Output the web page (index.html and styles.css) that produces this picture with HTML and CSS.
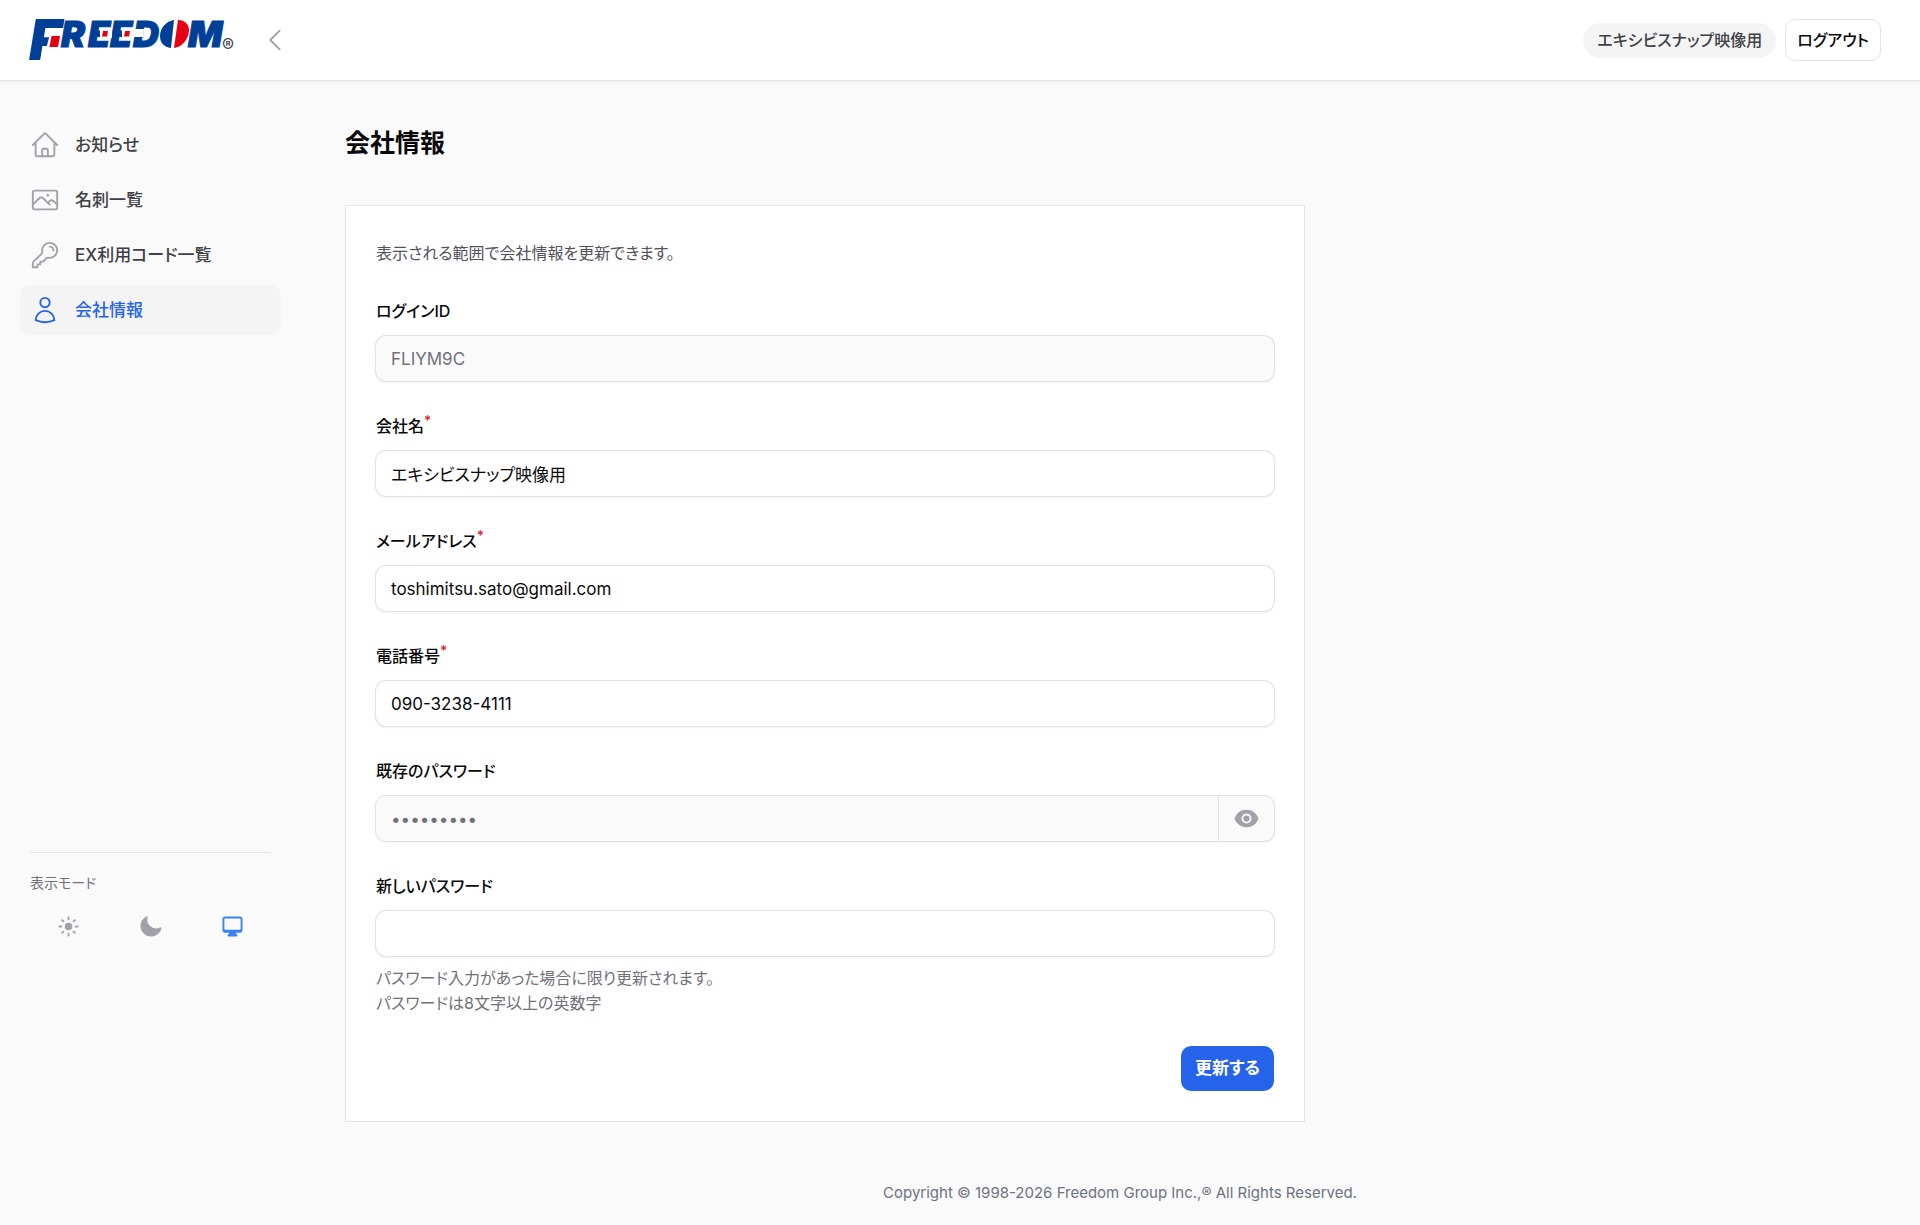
FILE: index.html
```html
<!DOCTYPE html>
<html lang="ja">
<head>
<meta charset="utf-8">
<meta name="viewport" content="width=device-width, initial-scale=1">
<title>会社情報</title>
<link rel="stylesheet" href="styles.css">
</head>
<body>
<header class="topbar">
  <a class="brand" href="#" aria-label="FREEDOM">
    <svg class="logo" width="206" height="42" viewBox="0 0 206 42" aria-hidden="true">
      <text class="logo-initial" x="-1" y="41">F</text>
      <path class="logo-gap" d="M20 15H34V30H16Z"/>
      <path class="logo-red" d="M21.500 17H30L28 28H19.500Z"/>
      <text class="logo-letters" x="31 58 80 103 158" y="28">REEDM</text>
      <path class="logo-gap" d="M70 10H82V19H70ZM92 10H104V19H92ZM101 10H114L113 18H101Z"/>
      <path class="logo-red" d="M73 12H78L77 17.500H72ZM95 12H100L99 17.500H94Z"/>
      <path class="logo-blue" d="M144 1C136 2 130 9 130 17C130 24 134 28 141 29Z"/>
      <path class="logo-red" d="M148 1C155 1 159 5 159 12C158 21 152 28 144 29Z"/>
      <text class="logo-mark" x="192" y="33">®</text>
    </svg>
  </a>
  <button class="collapse" type="button" aria-label="メニューを閉じる">
    <svg class="icon-outline" viewBox="0 0 24 24"><path d="M15.75 19.5 8.25 12l7.5-7.5"/></svg>
  </button>
  <div class="account">
    <span class="badge">エキシビスナップ映像用</span>
    <button class="logout" type="button">ログアウト</button>
  </div>
</header>
<div class="layout">
  <aside class="sidebar">
    <nav class="nav">
      <a class="nav-item" href="#">
        <svg class="icon-outline" viewBox="0 0 24 24"><path d="m2.25 12 8.954-8.955c.44-.439 1.152-.439 1.591 0L21.75 12M4.5 9.75v10.125c0 .621.504 1.125 1.125 1.125H9.75v-4.875c0-.621.504-1.125 1.125-1.125h2.25c.621 0 1.125.504 1.125 1.125V21h4.125c.621 0 1.125-.504 1.125-1.125V9.75M8.25 21h8.25"/></svg>
        お知らせ
      </a>
      <a class="nav-item" href="#">
        <svg class="icon-outline" viewBox="0 0 24 24"><path d="m2.25 15.75 5.159-5.159a2.25 2.25 0 0 1 3.182 0l5.159 5.159m-1.5-1.5 1.409-1.409a2.25 2.25 0 0 1 3.182 0l2.909 2.909m-18 3.75h16.5a1.5 1.5 0 0 0 1.5-1.5V6a1.5 1.5 0 0 0-1.5-1.5H3.75A1.5 1.5 0 0 0 2.25 6v12a1.5 1.5 0 0 0 1.5 1.5Zm10.5-11.25h.008v.008h-.008V8.25Zm.375 0a.375.375 0 1 1-.75 0 .375.375 0 0 1 .75 0Z"/></svg>
        名刺一覧
      </a>
      <a class="nav-item" href="#">
        <svg class="icon-outline" viewBox="0 0 24 24"><path d="M15.75 5.25a3 3 0 0 1 3 3m3 0a6 6 0 0 1-7.029 5.912c-.563-.097-1.159.026-1.563.43L10.5 17.25H8.25v2.25H6v2.25H2.25v-2.818c0-.597.237-1.17.659-1.591l6.499-6.499c.404-.404.527-1 .43-1.563A6 6 0 1 1 21.75 8.25Z"/></svg>
        EX利用コード一覧
      </a>
      <a class="nav-item nav-item-active" href="#" aria-current="page">
        <svg class="icon-outline" viewBox="0 0 24 24"><path d="M15.75 6a3.75 3.75 0 1 1-7.5 0 3.75 3.75 0 0 1 7.5 0ZM4.501 20.118a7.5 7.5 0 0 1 14.998 0A17.933 17.933 0 0 1 12 21.75c-2.676 0-5.216-.584-7.499-1.632Z"/></svg>
        会社情報
      </a>
    </nav>
    <div class="theme">
      <p class="theme-title">表示モード</p>
      <div class="theme-options">
        <button class="theme-button" type="button" aria-label="ライト">
          <svg class="icon-solid" viewBox="0 0 20 20"><path d="M10 2a.75.75 0 0 1 .75.75v1.5a.75.75 0 0 1-1.5 0v-1.5A.75.75 0 0 1 10 2ZM10 15a.75.75 0 0 1 .75.75v1.5a.75.75 0 0 1-1.5 0v-1.5A.75.75 0 0 1 10 15ZM10 7a3 3 0 1 0 0 6 3 3 0 0 0 0-6ZM15.657 5.404a.75.75 0 1 0-1.06-1.06l-1.061 1.06a.75.75 0 0 0 1.06 1.06l1.06-1.06ZM6.464 14.596a.75.75 0 1 0-1.06-1.06l-1.06 1.06a.75.75 0 0 0 1.06 1.06l1.06-1.06ZM18 10a.75.75 0 0 1-.75.75h-1.5a.75.75 0 0 1 0-1.5h1.5A.75.75 0 0 1 18 10ZM5 10a.75.75 0 0 1-.75.75h-1.5a.75.75 0 0 1 0-1.5h1.5A.75.75 0 0 1 5 10ZM14.596 15.657a.75.75 0 0 0 1.06-1.06l-1.06-1.061a.75.75 0 1 0-1.06 1.06l1.06 1.06ZM5.404 6.464a.75.75 0 0 0 1.06-1.06l-1.06-1.06a.75.75 0 1 0-1.061 1.06l1.06 1.06Z"/></svg>
        </button>
        <button class="theme-button" type="button" aria-label="ダーク">
          <svg class="icon-solid" viewBox="0 0 20 20"><path d="M7.455 2.004a.75.75 0 0 1 .26.77 7 7 0 0 0 9.958 7.967.75.75 0 0 1 1.067.853A8.5 8.5 0 1 1 6.647 1.921a.75.75 0 0 1 .808.083Z"/></svg>
        </button>
        <button class="theme-button theme-button-active" type="button" aria-label="システム">
          <svg class="icon-solid" viewBox="0 0 20 20"><path fill-rule="evenodd" d="M2 4.25A2.25 2.25 0 0 1 4.25 2h11.5A2.25 2.25 0 0 1 18 4.25v8.5A2.25 2.25 0 0 1 15.75 15h-3.105a3.501 3.501 0 0 0 1.1 1.677A.75.75 0 0 1 13.26 18H6.74a.75.75 0 0 1-.484-1.323A3.501 3.501 0 0 0 7.355 15H4.25A2.25 2.25 0 0 1 2 12.75v-8.5Zm1.5 0a.75.75 0 0 1 .75-.75h11.5a.75.75 0 0 1 .75.75v7.5a.75.75 0 0 1-.75.75H4.25a.75.75 0 0 1-.75-.75v-7.5Z"/></svg>
        </button>
      </div>
    </div>
  </aside>
  <div class="content">
    <main class="page">
      <h1 class="page-title">会社情報</h1>
      <form class="card">
        <p class="intro">表示される範囲で会社情報を更新できます。</p>
        <div class="fields">
          <div class="field">
            <label class="label" for="login-id">ログインID</label>
            <input class="input" id="login-id" type="text" value="FLIYM9C" disabled>
          </div>
          <div class="field">
            <label class="label" for="company">会社名<sup class="required">*</sup></label>
            <input class="input" id="company" type="text" value="エキシビスナップ映像用">
          </div>
          <div class="field">
            <label class="label" for="email">メールアドレス<sup class="required">*</sup></label>
            <input class="input" id="email" type="email" value="toshimitsu.sato@gmail.com">
          </div>
          <div class="field">
            <label class="label" for="phone">電話番号<sup class="required">*</sup></label>
            <input class="input" id="phone" type="tel" value="090-3238-4111">
          </div>
          <div class="field">
            <label class="label" for="current-password">既存のパスワード</label>
            <div class="input-group">
              <input class="input" id="current-password" type="password" value="password1" disabled>
              <button class="reveal" type="button" aria-label="パスワードを表示">
                <svg class="icon-solid" viewBox="0 0 20 20"><path d="M10 12.5a2.5 2.5 0 1 0 0-5 2.5 2.5 0 0 0 0 5Z"/><path fill-rule="evenodd" d="M.664 10.59a1.651 1.651 0 0 1 0-1.186A10.004 10.004 0 0 1 10 3c4.257 0 7.893 2.66 9.336 6.41.147.381.146.804 0 1.186A10.004 10.004 0 0 1 10 17c-4.257 0-7.893-2.66-9.336-6.41ZM14 10a4 4 0 1 1-8 0 4 4 0 0 1 8 0Z"/></svg>
              </button>
            </div>
          </div>
          <div class="field">
            <label class="label" for="new-password">新しいパスワード</label>
            <input class="input" id="new-password" type="password" aria-describedby="password-help">
            <p class="help" id="password-help">パスワード入力があった場合に限り更新されます。<br>パスワードは8文字以上の英数字</p>
          </div>
        </div>
        <div class="actions"><button class="submit" type="submit">更新する</button></div>
      </form>
    </main>
    <footer class="footer">Copyright © 1998-2026 Freedom Group Inc.,® All Rights Reserved.</footer>
  </div>
</div>
</body>
</html>
```
FILE: styles.css
```css
*, *::before, *::after { box-sizing: border-box; }

body {
  display: flex;
  flex-direction: column;
  min-height: 100vh;
  margin: 0;
  background: #fafafa;
  color: #09090b;
  font-family: Inter, "Noto Sans CJK JP", sans-serif;
  font-size: 17px;
  line-height: 25px;
  font-feature-settings: "palt";
}

h1, p { margin: 0; }

button, input { font: inherit; font-feature-settings: inherit; color: inherit; }
button { cursor: pointer; }

.icon-outline {
  flex: none;
  width: 30px;
  height: 30px;
  fill: none;
  stroke: #a1a1aa;
  stroke-width: 1.5;
  stroke-linecap: round;
  stroke-linejoin: round;
}

.icon-solid {
  width: 25px;
  height: 25px;
  fill: currentColor;
}

/* Top bar */
.topbar {
  display: flex;
  align-items: center;
  height: 80px;
  padding: 0 39px 0 30px;
  background: #fff;
  box-shadow: 0 0 0 1px #e4e4e7, 0 1px 3px #0000001a;
}

.brand, .collapse { display: flex; }

.logo { overflow: visible; }
.logo text { font-family: Inter, sans-serif; fill: #003f98; }
.logo .logo-initial { font-size: 56px; font-weight: 900; font-style: italic; }
.logo .logo-letters {
  font-size: 36px;
  font-weight: 900;
  font-style: italic;
  stroke: #003f98;
  stroke-width: 1;
}
.logo .logo-mark { font-size: 18px; fill: #3f3f46; }
.logo-blue { fill: #003f98; }
.logo-red { fill: #e60012; }
.logo-gap { fill: #fff; }

.collapse {
  margin-left: 24px;
  padding: 0;
  border: 0;
  background: none;
}

.account {
  display: flex;
  align-items: center;
  gap: 9px;
  margin-left: auto;
  font-size: 16px;
}

.badge {
  padding: 5px 14px;
  border-radius: 18px;
  background: #f4f4f5;
  color: #3f3f46;
  font-weight: 500;
}

.logout {
  height: 42px;
  padding: 0 11px;
  border: 1px solid #e4e4e7;
  border-radius: 10px;
  background: #fff;
  font-weight: 500;
}

/* Sidebar */
.layout { display: flex; flex: 1; }

.sidebar {
  display: flex;
  flex: none;
  flex-direction: column;
  justify-content: space-between;
  width: 320px;
  height: calc(80vh - 80px);
  min-height: 500px;
  padding: 40px 39px 29px 20px;
}

.nav { display: flex; flex-direction: column; gap: 5px; }

.nav-item {
  display: flex;
  align-items: center;
  gap: 15px;
  height: 50px;
  padding: 0 10px;
  border-radius: 10px;
  color: #3f3f46;
  font-weight: 500;
  text-decoration: none;
}

.nav-item-active { background: #f4f4f5; color: #2563eb; }
.nav-item-active .icon-outline { stroke: #2563eb; }

.theme {
  margin: 0 10px;
  padding-top: 17px;
  border-top: 1px solid #e4e4e7;
}

.theme-title { color: #71717a; font-size: 14px; }

.theme-options {
  display: grid;
  grid-template-columns: repeat(3, 1fr);
  gap: 5px;
  margin-top: 6px;
}

.theme-button {
  display: flex;
  align-items: center;
  justify-content: center;
  height: 50px;
  padding: 0;
  border: 0;
  background: none;
  color: #a1a1aa;
}

.theme-button-active { color: #3b82f6; }

/* Page */
.content {
  display: flex;
  flex: 1;
  flex-direction: column;
  justify-content: space-between;
  min-width: 0;
}

.page {
  max-width: 1010px;
  padding: 41px 25px 30px;
}

.page-title {
  margin-bottom: 39px;
  font-size: 25px;
  font-weight: 700;
  line-height: 45px;
}

.card {
  padding: 35px 30px 30px;
  border: 1px solid #e4e4e7;
  background: #fff;
}

.intro { margin-bottom: 30px; color: #52525b; font-size: 16px; }

.fields { display: grid; gap: 30px; }
.field { display: flex; flex-direction: column; }

.label {
  align-self: flex-start;
  margin-bottom: 10px;
  font-size: 16px;
  font-weight: 500;
  line-height: 30px;
}

.required {
  color: #dc2626;
  font-size: 14px;
  line-height: 0;
}

.input {
  width: 100%;
  height: 45px;
  padding: 0 15px;
  border: 0;
  border-radius: 10px;
  background: #fff;
  box-shadow: 0 0 0 1px #e2e2e4, 0 1px 2px 1px #0000000d;
}

.input:disabled { background: #fafafa; color: #71717a; }

.input-group {
  display: flex;
  border-radius: 10px;
  background: #fafafa;
  box-shadow: 0 0 0 1px #e2e2e4, 0 1px 2px 1px #0000000d;
}
.input-group .input { border-radius: 10px 0 0 10px; box-shadow: none; }

.reveal {
  display: flex;
  flex: none;
  align-items: center;
  justify-content: center;
  width: 56px;
  border: 0;
  border-left: 1px solid #e4e4e7;
  border-radius: 0 10px 10px 0;
  background: none;
  color: #a1a1aa;
}

.help { margin-top: 10px; color: #71717a; font-size: 16px; }

.actions {
  display: flex;
  justify-content: flex-end;
  margin-top: 30px;
}

.submit {
  height: 45px;
  padding: 0 14px;
  border: 0;
  border-radius: 10px;
  background: #2563eb;
  color: #fff;
  font-weight: 700;
}

.footer {
  padding: 20px;
  color: #6b7280;
  font-size: 15px;
  text-align: center;
}
```
